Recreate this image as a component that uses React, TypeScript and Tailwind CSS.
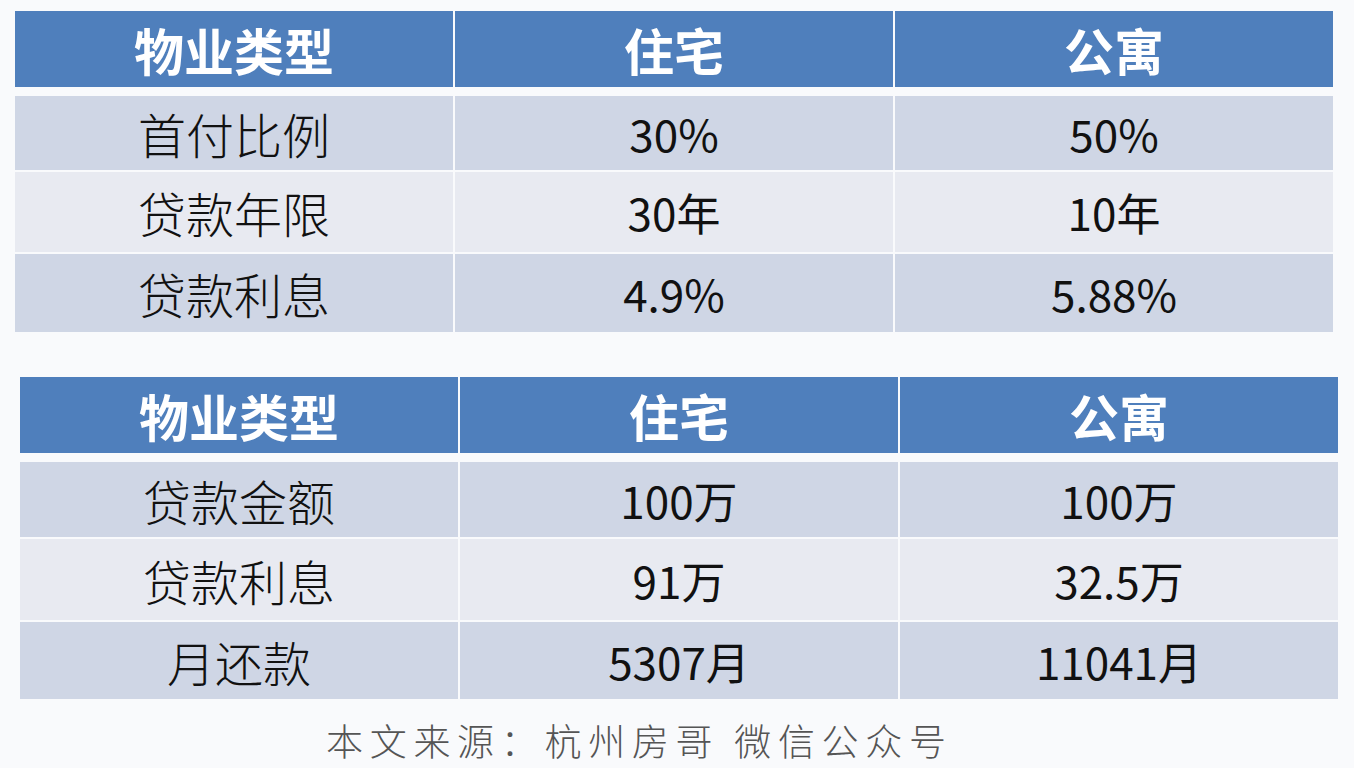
import React from "react";

const font = { fontFamily: '"Noto Sans CJK SC", "Noto Sans", sans-serif' };

type Row = { cells: string[]; h: string; bg: string };

function Table({
  header,
  rows,
  className,
}: {
  header: string[];
  rows: Row[];
  className: string;
}) {
  return (
    <div className={`w-[1318px] flex flex-col ${className}`}>
      <div className="grid grid-cols-3 gap-x-[2px] h-[76px]">
        {header.map((h, i) => (
          <div
            key={i}
            className="bg-[#4f7fbc] text-white font-semibold text-[50px] flex items-center justify-center leading-none"
          >
            {h}
          </div>
        ))}
      </div>
      <div className="flex flex-col gap-y-[2px] mt-[9px]">
        {rows.map((r, ri) => (
          <div key={ri} className={`grid grid-cols-3 gap-x-[2px] ${r.h}`}>
            {r.cells.map((c, ci) => (
              <div
                key={ci}
                className={`${r.bg} text-[#111] ${ci === 0 ? "text-[48px] font-light" : "text-[44px]"} flex items-center justify-center leading-none`}
              >
                {c}
              </div>
            ))}
          </div>
        ))}
      </div>
    </div>
  );
}

export default function App() {
  const odd = "bg-[#cfd6e5]";
  const even = "bg-[#e8eaf1]";
  return (
    <div className="w-[1354px] h-[768px] bg-[#f9fafc] overflow-hidden" style={font}>
      <div className="pt-[11px]">
        <Table
          className="ml-[15px]"
          header={["物业类型", "住宅", "公寓"]}
          rows={[
            { cells: ["首付比例", "30%", "50%"], h: "h-[74px]", bg: odd },
            { cells: ["贷款年限", "30年", "10年"], h: "h-[80px]", bg: even },
            { cells: ["贷款利息", "4.9%", "5.88%"], h: "h-[78px]", bg: odd },
          ]}
        />
        <Table
          className="ml-[20px] mt-[45px]"
          header={["物业类型", "住宅", "公寓"]}
          rows={[
            { cells: ["贷款金额", "100万", "100万"], h: "h-[75px]", bg: odd },
            { cells: ["贷款利息", "91万", "32.5万"], h: "h-[81px]", bg: even },
            { cells: ["月还款", "5307月", "11041月"], h: "h-[77px]", bg: odd },
          ]}
        />
        <div className="mt-[19px] ml-[326px] h-[44px] leading-[44px] text-[37px] tracking-[6.7px] text-[#555] font-light whitespace-pre">
          本文来源：杭州房哥 微信公众号
        </div>
      </div>
    </div>
  );
}
